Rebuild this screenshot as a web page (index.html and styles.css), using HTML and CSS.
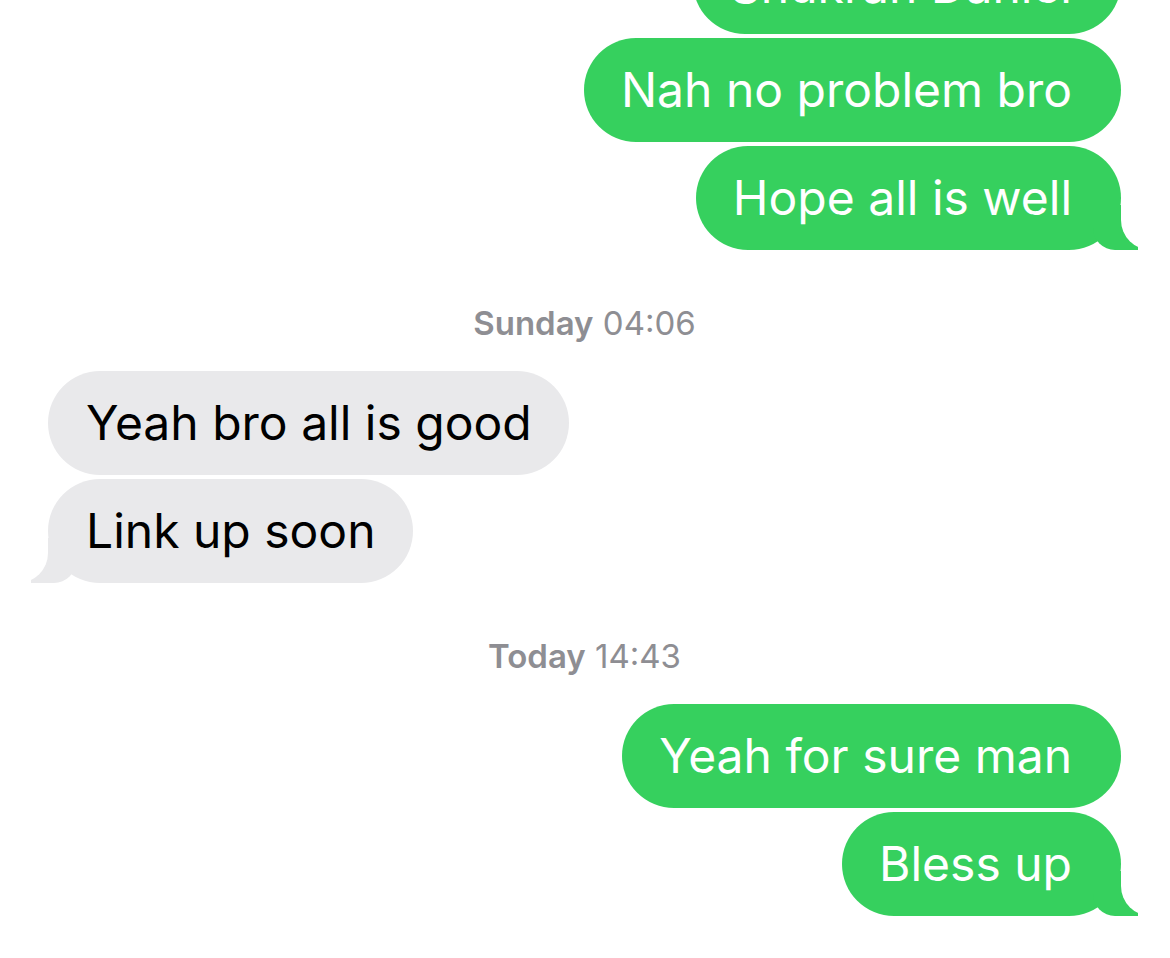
FILE: index.html
```html
<!DOCTYPE html>
<html lang="en">
<head>
	<meta charset="UTF-8">
	<title>Messages</title>
	<link rel="stylesheet" href="styles.css">
</head>
<body>
	<div class="thread">
		<div class="msg sent cut">Shukran Daniel</div>
		<div class="msg sent">Nah no problem bro</div>
		<div class="msg sent tail">Hope all is well</div>

		<div class="stamp"><b>Sunday</b> 04:06</div>
		<div class="msg recv">Yeah bro all is good</div>
		<div class="msg recv tail">Link up soon</div>

		<div class="stamp"><b>Today</b> 14:43</div>
		<div class="msg sent">Yeah for sure man</div>
		<div class="msg sent tail">Bless up</div>
	</div>
</body>
</html>
```

FILE: styles.css
```css
body{margin:0;padding:0;background:#fff;font-family:Inter,"Liberation Sans",sans-serif;overflow:hidden}
.thread{display:flex;flex-direction:column;gap:4px;padding:0 49px 0 48px;margin-top:-70px}
.msg{position:relative;height:104px;box-sizing:border-box;border-radius:52px;font-size:48px;line-height:104px;white-space:nowrap}
.sent{align-self:flex-end;background:#36d05e;color:#fff;padding:0 49px 0 37px}
.recv{align-self:flex-start;background:#e9e9eb;color:#000;padding:0 37px 0 38px}
.cut{line-height:112px}

/* bubble tails */
.tail::before,.tail::after{content:"";position:absolute;bottom:0}
.sent.tail::before{right:-17px;width:45px;height:45px;background:#36d05e;border-bottom-left-radius:22px}
.sent.tail::after{right:-30px;width:30px;height:46px;background:#fff;border-bottom-left-radius:30px}
.recv.tail::before{left:-17px;width:45px;height:45px;background:#e9e9eb;border-bottom-right-radius:22px}
.recv.tail::after{left:-30px;width:30px;height:46px;background:#fff;border-bottom-right-radius:30px}

.stamp{align-self:center;margin:51px 0 26px;line-height:36px;font-size:33px;color:#8e8e93;font-weight:400}
.stamp b{font-weight:600}
```
